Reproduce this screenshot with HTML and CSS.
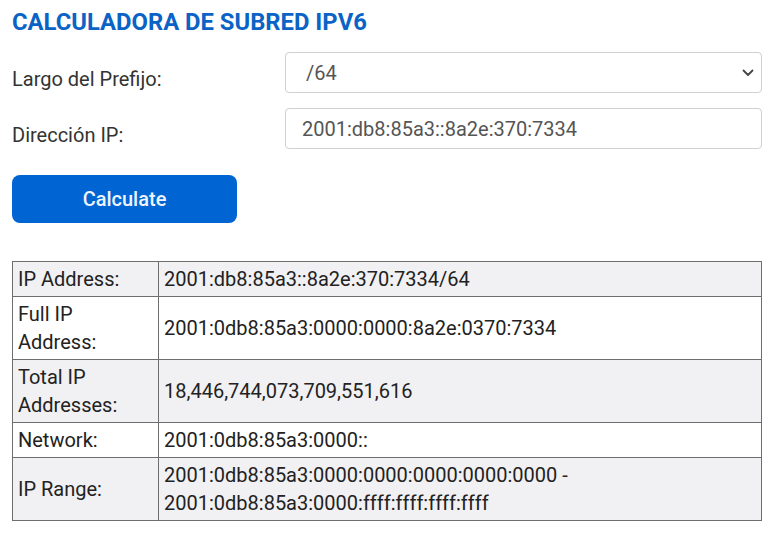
FILE: index.html
```html
<!DOCTYPE html>
<html lang="es">
<head>
<meta charset="utf-8">
<title>Calculadora de Subred IPv6</title>
<link rel="stylesheet" href="styles.css">
</head>
<body>
<main class="calc">
  <h1 class="title">CALCULADORA DE SUBRED IPV6</h1>
  <form class="form">
    <div class="row">
      <label class="label" for="prefix">Largo del Prefijo:</label>
      <div class="select-wrap">
        <select id="prefix" class="field select">
          <option>/64</option>
        </select>
        <svg class="chev" width="12" height="8" viewBox="0 0 12 8" aria-hidden="true"><path d="M1.5 1.5 L6 6 L10.5 1.5" fill="none" stroke="#444" stroke-width="1.8" stroke-linecap="round" stroke-linejoin="round"/></svg>
      </div>
    </div>
    <div class="row">
      <label class="label" for="ip">Dirección IP:</label>
      <input id="ip" class="field input" type="text" value="2001:db8:85a3::8a2e:370:7334">
    </div>
    <button type="button" class="btn">Calculate</button>
  </form>
  <table class="results">
    <tr class="odd"><th>IP Address:</th><td>2001:db8:85a3::8a2e:370:7334/64</td></tr>
    <tr><th>Full IP Address:</th><td>2001:0db8:85a3:0000:0000:8a2e:0370:7334</td></tr>
    <tr class="odd"><th>Total IP Addresses:</th><td>18,446,744,073,709,551,616</td></tr>
    <tr><th>Network:</th><td>2001:0db8:85a3:0000::</td></tr>
    <tr class="odd"><th>IP Range:</th><td>2001:0db8:85a3:0000:0000:0000:0000:0000 -<br>2001:0db8:85a3:0000:ffff:ffff:ffff:ffff</td></tr>
  </table>
</main>
</body>
</html>
```

FILE: styles.css
```css
* { box-sizing: border-box; }
html, body { margin: 0; background: #fff; }
body {
  font-family: Roboto, "Liberation Sans", Arial, sans-serif;
  color: #333;
}
.calc {
  width: 768px;
  padding: 8px 6px 0 12px;
}
.title {
  margin: 0;
  font-size: 23.8px;
  line-height: 29px;
  font-weight: 700;
  color: #0b63c5;
}
.form {
  margin-top: 15px;
  display: flex;
  flex-direction: column;
}
.row {
  display: grid;
  grid-template-columns: 273px 477px;
  align-items: end;
  margin-bottom: 15px;
}
.label {
  font-size: 20px;
  line-height: 28px;
  color: #333;
}
.select-wrap { position: relative; }
.field {
  display: block;
  width: 477px;
  height: 41px;
  border: 1px solid #cfcfd4;
  border-radius: 4px;
  background: #fff;
  font-family: Roboto, "Liberation Sans", Arial, sans-serif;
  font-size: 20px;
  color: #555;
  margin: 0;
}
.select {
  appearance: none;
  -webkit-appearance: none;
  padding: 0 30px 0 20px;
}
.input {
  padding: 0 16px;
}
.chev {
  position: absolute;
  right: 8px;
  top: 17px;
}
.btn {
  margin-top: 11px;
  width: 225px;
  height: 48px;
  border: 0;
  border-radius: 8px;
  background: #0064d2;
  color: #eef4ff;
  font-family: Roboto, "Liberation Sans", Arial, sans-serif;
  font-size: 20px;
  font-weight: 500;
}
.results {
  margin-top: 38px;
  width: 750px;
  border-collapse: collapse;
  font-size: 20px;
  line-height: 28px;
  color: #222;
}
.results th, .results td {
  border: 1px solid #6e6e6e;
  padding: 3px 5px;
  text-align: left;
  font-weight: 400;
  vertical-align: middle;
}
.results th { width: 146px; }
.results tr.odd { background: #f1f0f3; }
```
